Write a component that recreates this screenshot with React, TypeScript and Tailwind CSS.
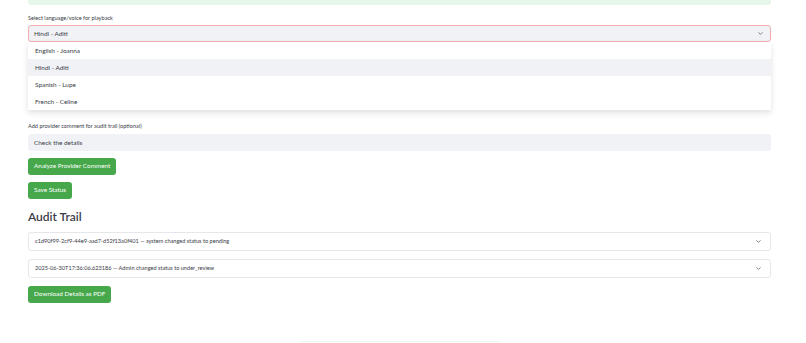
import { ChevronDown } from "lucide-react";

const VOICES = ["English - Joanna", "Hindi - Aditi", "Spanish - Lupe", "French - Celine"];
const SELECTED = "Hindi - Aditi";

const AUDIT = [
  "c1d90f99-2cf9-44e9-aad7-d52f13a0f401 — system changed status to pending",
  "2025-06-30T17:36:06.623186 — Admin changed status to under_review",
];

function GreenButton({ label }: { label: string }) {
  return (
    <button
      type="button"
      className="flex h-[17px] items-center self-start rounded-[3px] bg-[#46a84b] px-[6px] text-[6.4px] leading-none text-white"
    >
      {label}
    </button>
  );
}

export default function App() {
  return (
    <div
      className="relative h-[343px] w-[806px] overflow-hidden bg-white text-[#3a3c47]"
      style={{ fontFamily: '"Source Sans Pro", Lato, "Noto Sans", sans-serif' }}
    >
      <div className="ml-[28px] flex w-[743px] flex-col">
        <div className="h-[5px] rounded-b-[3px] bg-[#e7f6eb]" />

        <label className="mt-[9px] h-[7px] text-[5.6px] leading-[7px]">
          Select language/voice for playback
        </label>

        <div className="relative mt-[4px]">
          <div className="flex h-[17px] items-center justify-between rounded-[3px] border border-[#f2adb0] bg-[#f0f2f6] pl-[5px] pr-[6px] text-[6.4px]">
            <span>{SELECTED}</span>
            <ChevronDown className="h-[7px] w-[7px] text-[#555]" strokeWidth={2.5} />
          </div>
          <ul className="absolute left-0 right-0 top-full z-10 bg-white shadow-[0_3px_6px_rgba(0,0,0,0.12)]">
            {VOICES.map((v) => (
              <li
                key={v}
                className={
                  v === SELECTED
                    ? "flex h-[17px] items-center bg-[#f0f2f6] px-[7px] text-[6.4px]"
                    : "flex h-[17px] items-center px-[7px] text-[6.4px]"
                }
              >
                {v}
              </li>
            ))}
          </ul>
        </div>

        <label className="mt-[80px] h-[7px] text-[5.6px] leading-[7px]">
          Add provider comment for audit trail (optional)
        </label>
        <div className="mt-[5px] flex h-[17px] items-center rounded-[3px] bg-[#f0f2f6] px-[6px] text-[6.4px]">
          Check the details
        </div>

        <div className="mt-[7px] flex flex-col gap-[7px]">
          <GreenButton label="Analyze Provider Comment" />
          <GreenButton label="Save Status" />
        </div>

        <h3 className="mt-[11px] text-[12px] font-semibold leading-[14px]">Audit Trail</h3>

        <div className="mt-[8px] flex flex-col gap-[8px]">
          {AUDIT.map((a) => (
            <div
              key={a}
              className="flex h-[19px] items-center justify-between rounded-[3px] border border-[#e6e7ea] pl-[6px] pr-[8px] text-[5.6px]"
            >
              <span>{a}</span>
              <ChevronDown className="h-[7px] w-[7px] text-[#555]" strokeWidth={2.5} />
            </div>
          ))}
        </div>

        <div className="mt-[8px] flex">
          <GreenButton label="Download Details as PDF" />
        </div>
      </div>

      <div className="absolute bottom-[1px] left-[300px] h-px w-[200px] bg-[#f4f4f4]" />
    </div>
  );
}
